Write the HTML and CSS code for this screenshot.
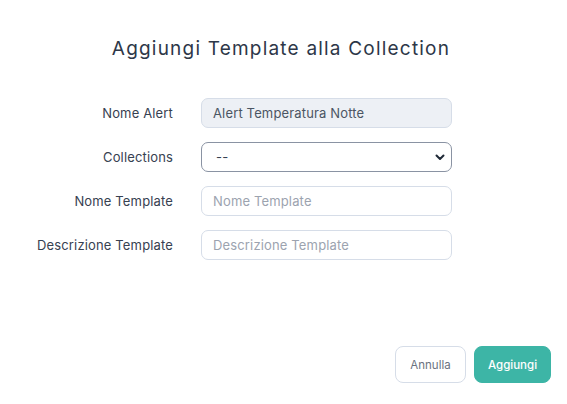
FILE: index.html
```html
<!DOCTYPE html>
<html lang="it">
<head>
<meta charset="utf-8">
<link rel="stylesheet" href="styles.css">
</head>
<body>
<div class="modal">
  <h1 class="title">Aggiungi Template alla Collection</h1>
  <form class="form">
    <label class="label" for="f1">Nome Alert</label>
    <input class="field field-disabled" id="f1" type="text" value="Alert Temperatura Notte" disabled>
    <label class="label" for="f2">Collections</label>
    <div class="select-wrap">
      <select class="field field-select" id="f2"><option>--</option></select>
      <svg class="chevron" viewBox="0 0 12 12" width="12" height="12"><path d="M2.5 4.5 L6 8 L9.5 4.5" fill="none" stroke="#1f2937" stroke-width="2" stroke-linecap="round" stroke-linejoin="round"/></svg>
    </div>
    <label class="label" for="f3">Nome Template</label>
    <input class="field" id="f3" type="text" placeholder="Nome Template">
    <label class="label" for="f4">Descrizione Template</label>
    <input class="field" id="f4" type="text" placeholder="Descrizione Template">
  </form>
  <div class="footer">
    <button class="btn btn-cancel" type="button">Annulla</button>
    <button class="btn btn-primary" type="button">Aggiungi</button>
  </div>
</div>
</body>
</html>
```
FILE: styles.css
```css
* { box-sizing: border-box; }
html, body { margin: 0; padding: 0; background: #ffffff; }
body {
  font-family: Inter, "Open Sans", "Liberation Sans", sans-serif;
  width: 567px;
  height: 404px;
  overflow: hidden;
}
.modal {
  display: flex;
  flex-direction: column;
  height: 404px;
  padding: 36px 16px 21px 16px;
}
.title {
  margin: 0;
  padding-right: 5px;
  text-align: center;
  font-size: 19px;
  font-weight: 400;
  color: #2d3748;
  line-height: 25px;
  letter-spacing: 1.2px;
}
.form {
  display: grid;
  grid-template-columns: 157px 251px;
  column-gap: 28px;
  row-gap: 14px;
  margin-top: 37px;
  align-items: center;
}
.label {
  text-align: right;
  font-size: 13px;
  letter-spacing: 0.15px;
  color: #374151;
}
.field {
  width: 251px;
  height: 30px;
  border: 1px solid #d6dde8;
  border-radius: 7px;
  background: #ffffff;
  padding: 0 11px;
  font-family: inherit;
  font-size: 13px;
  letter-spacing: 0.15px;
  color: #374151;
  outline: none;
}
.field::placeholder { color: #9ca3af; }
.field-disabled {
  background: #edf0f5;
  color: #4b5563;
}
.select-wrap { position: relative; width: 251px; height: 30px; }
.field-select {
  appearance: none;
  -webkit-appearance: none;
  border-color: #8a93a3;
  padding-left: 14px;
  color: #374151;
}
.chevron { position: absolute; right: 6px; top: 9px; pointer-events: none; }
.footer {
  margin-top: auto;
  display: flex;
  justify-content: flex-end;
  gap: 8px;
}
.btn {
  height: 37px;
  border-radius: 8px;
  font-family: inherit;
  font-size: 11.5px;
  padding: 0;
  cursor: pointer;
}
.btn-cancel {
  width: 71px;
  background: #ffffff;
  border: 1px solid #d6dde8;
  color: #6b7280;
}
.btn-primary {
  width: 77px;
  background: #3db5a6;
  border: 1px solid #3db5a6;
  color: #ffffff;
  font-weight: 500;
}
```
